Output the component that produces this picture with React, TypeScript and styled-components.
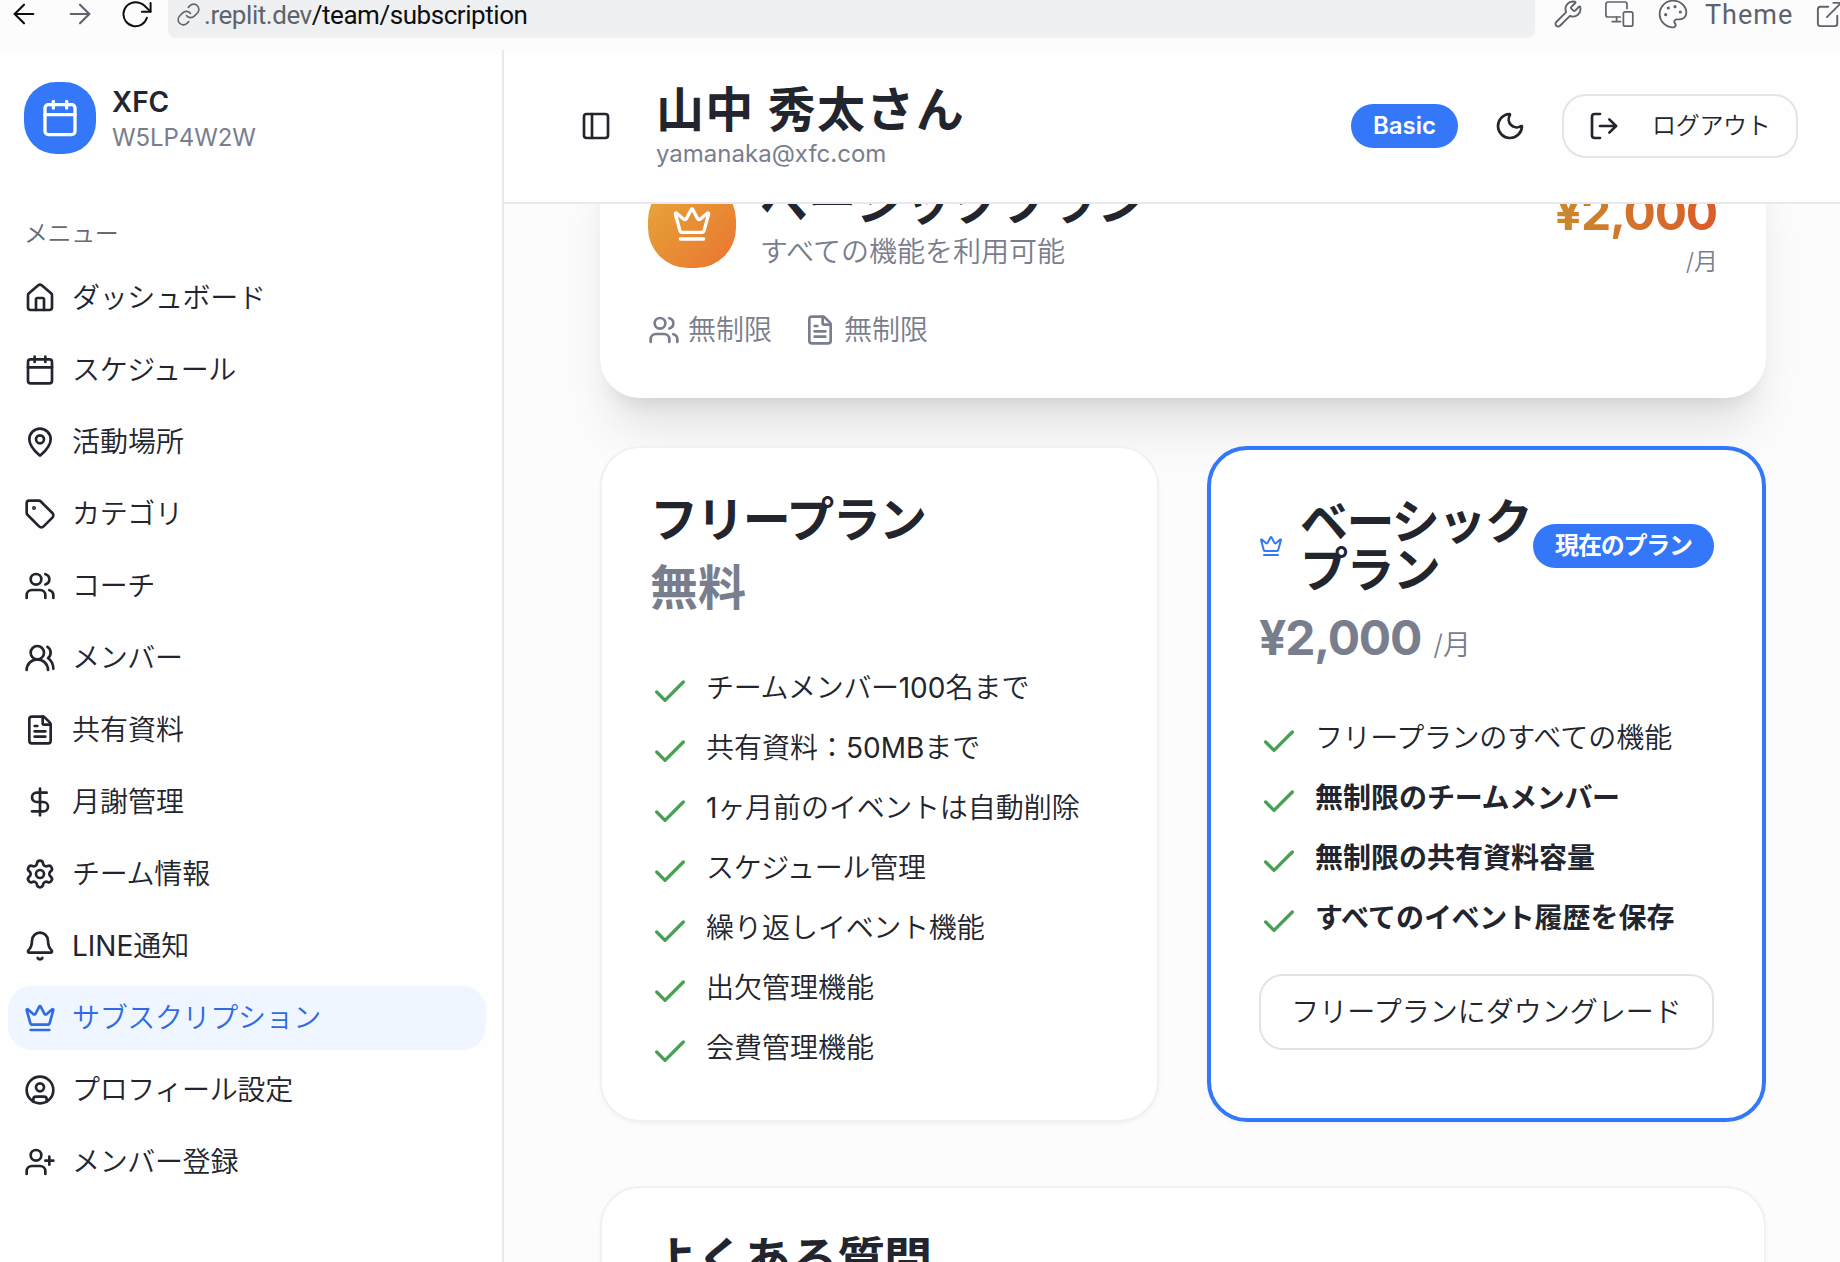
import React from "react";
import styled, { createGlobalStyle, css } from "styled-components";
import {
  ArrowLeft,
  ArrowRight,
  Bell,
  Calendar,
  Check,
  CircleUser,
  Crown,
  DollarSign,
  ExternalLink,
  FileText,
  House,
  Link,
  LogOut,
  MapPin,
  Moon,
  Palette,
  PanelLeft,
  Settings,
  Tag,
  UserPlus,
  Users,
  UsersRound,
  Wrench,
} from "lucide-react";

const color = {
  ink: "#22252d",
  muted: "#787e8d",
  blue: "#3477f8",
  border: "#e8e9ed",
  page: "#fcfcfc",
  panel: "#fefefe",
  chrome: "#5f636b",
  green: "#48a152",
};

const GlobalStyle = createGlobalStyle`
  *, *::before, *::after { box-sizing: border-box; }
  body {
    margin: 0;
    background: ${color.page};
    color: ${color.ink};
    font-family: Inter, "Noto Sans CJK JP", sans-serif;
    font-size: 28px;
    line-height: 40px;
    font-weight: 400;
    -webkit-font-smoothing: antialiased;
  }
  h1, h2, h3, p, ul { margin: 0; padding: 0; }
  ul { list-style: none; }
  svg { flex-shrink: 0; display: block; }
  button { font: inherit; color: inherit; cursor: pointer; }
`;

const Page = styled.div`
  width: 1840px;
  height: 1262px;
  overflow: hidden;
  display: flex;
  flex-direction: column;
`;

/* ---------- browser bar ---------- */

const BrowserBar = styled.div`
  height: 50px;
  flex: none;
  display: flex;
  align-items: flex-start;
  background: ${color.page};
  color: ${color.chrome};
  overflow: hidden;
  font-family: Roboto, "Noto Sans", sans-serif;
`;

const NavButtons = styled.div`
  display: flex;
  align-items: center;
  flex: none;
  width: 168px;
  height: 28px;
  padding-left: 8px;
  gap: 24px;
`;

const AddressBar = styled.div`
  flex: none;
  width: 1367px;
  height: 38px;
  padding: 0 0 10px 8px;
  display: flex;
  align-items: center;
  gap: 3px;
  background: #eff0f2;
  border-radius: 0 0 8px 8px;
`;

const Address = styled.span`
  padding-top: 2px;
  font-size: 26px;
  line-height: 28px;
  letter-spacing: -0.45px;
  white-space: nowrap;
`;

const AddressPath = styled.span`
  color: #0d0e11;
`;

const Tools = styled.div`
  flex: none;
  height: 28px;
  padding-left: 18px;
  display: flex;
  align-items: center;
  white-space: nowrap;
`;

const ToolSlot = styled.span<{ $gap: number }>`
  display: flex;
  margin-right: ${(p) => p.$gap}px;
`;

const ThemeLabel = styled.span`
  width: 109px;
  padding-top: 2px;
  font-size: 27px;
  line-height: 28px;
  letter-spacing: 1px;
`;

/* ---------- shell ---------- */

const Shell = styled.div`
  flex: 1;
  min-height: 0;
  display: flex;
`;

const Sidebar = styled.aside`
  width: 504px;
  flex: none;
  background: ${color.panel};
  border-right: 2px solid ${color.border};
`;

const Brand = styled.div`
  display: flex;
  align-items: center;
  gap: 16px;
  padding: 32px 24px 0;
`;

const BrandMark = styled.div`
  width: 72px;
  height: 72px;
  display: grid;
  place-items: center;
  border-radius: 32px;
  background: ${color.blue};
  color: #fff;
`;

const BrandText = styled.div`
  padding-top: 2px;
`;

const BrandName = styled.div`
  font-weight: 600;
  font-size: 28px;
  line-height: 37px;
`;

const BrandCode = styled.div`
  font-size: 24px;
  line-height: 33px;
  letter-spacing: -0.1px;
  color: ${color.muted};
`;

const MenuLabel = styled.div`
  padding: 64px 24px 0;
  font-size: 24px;
  line-height: 32px;
  font-weight: 350;
  letter-spacing: -0.4px;
  color: #666a73;
`;

const Menu = styled.nav`
  display: flex;
  flex-direction: column;
  gap: 8px;
  padding: 16px 16px 0 8px;
`;

const MenuItem = styled.a<{ $active?: boolean }>`
  height: 64px;
  display: flex;
  align-items: center;
  gap: 16px;
  padding: 0 16px;
  border-radius: 24px;
  font-weight: 350;
  ${(p) =>
    p.$active &&
    css`
      background: #eff6ff;
      color: #2f6be4;
    `}
`;

const Main = styled.main`
  flex: 1;
  min-width: 0;
  display: flex;
  flex-direction: column;
`;

const Header = styled.header`
  height: 154px;
  flex: none;
  display: flex;
  align-items: center;
  padding: 0 42px 0 76px;
  background: ${color.panel};
  border-bottom: 2px solid ${color.border};
`;

const Identity = styled.div`
  margin-left: 44px;
  padding-bottom: 2px;
  flex: 1;
`;

const UserName = styled.h1`
  font-size: 48px;
  line-height: 60px;
  font-weight: 700;
  letter-spacing: 1.3px;
  word-spacing: 0.5px;
`;

const Email = styled.p`
  margin-top: -2px;
  font-size: 24px;
  line-height: 32px;
  color: ${color.muted};
`;

const Badge = styled.span<{ $tight?: boolean }>`
  height: 44px;
  flex: none;
  display: flex;
  align-items: center;
  justify-content: center;
  width: ${(p) => (p.$tight ? 181 : 107)}px;
  border-radius: 22px;
  background: ${color.blue};
  color: #fff;
  font-size: 24px;
  font-weight: 600;
  letter-spacing: ${(p) => (p.$tight ? "-1.2px" : "0")};
  white-space: nowrap;
`;

const IconButton = styled.button`
  border: 0;
  background: none;
  padding: 0;
  margin: 0 36px;
  display: flex;
`;

const LogoutButton = styled.button`
  width: 236px;
  height: 64px;
  display: flex;
  align-items: center;
  gap: 32px;
  padding: 0 24px;
  border: 2px solid #e4e4e6;
  border-radius: 24px;
  background: ${color.panel};
  font-size: 24px;
  font-weight: 350;
  letter-spacing: -0.3px;
  white-space: nowrap;
`;

const ScrollArea = styled.div`
  flex: 1;
  min-height: 0;
  overflow: hidden;
  background: ${color.page};
`;

const Content = styled.div`
  margin-top: -72px;
  padding: 0 74px 0 96px;
`;

/* ---------- current plan ---------- */

const CurrentPlan = styled.section`
  height: 266px;
  padding: 48px;
  border-radius: 40px;
  background: #fff;
  box-shadow:
    0 40px 50px -10px rgba(0, 0, 0, 0.1),
    0 16px 20px -12px rgba(0, 0, 0, 0.1);
`;

const CurrentTop = styled.div`
  display: flex;
  align-items: flex-start;
  height: 88px;
`;

const PlanMark = styled.div`
  width: 88px;
  height: 88px;
  display: grid;
  place-items: center;
  border-radius: 40px;
  color: #fff;
  background: linear-gradient(135deg, #e6aa3a, #ea7430);
`;

const CurrentText = styled.div`
  flex: 1;
  margin-left: 24px;
`;

const Title = styled.h2`
  font-size: 48px;
  line-height: 48px;
  font-weight: 700;
  letter-spacing: -1.6px;
`;

const CurrentTitle = styled(Title)`
  margin-top: -1px;
  letter-spacing: 0.3px;
`;

const FaqTitle = styled(Title)`
  letter-spacing: -1.2px;
`;

const Subtitle = styled.p`
  padding-top: 5px;
  color: ${color.muted};
  font-weight: 350;
`;

const CurrentPrice = styled.div`
  padding-top: 1px;
  text-align: right;
`;

const GradientAmount = styled.div`
  padding-right: 1px;
  font-size: 48px;
  line-height: 64px;
  font-weight: 700;
  letter-spacing: -1.2px;
  background: linear-gradient(90deg, #ca8a2c, #dd5a2a);
  background-clip: text;
  -webkit-background-clip: text;
  color: transparent;
`;

const PerMonthSmall = styled.div`
  padding-top: 1px;
  font-size: 24px;
  line-height: 32px;
  font-weight: 350;
  color: ${color.muted};
`;

const Stats = styled.div`
  display: flex;
  gap: 32px;
  margin-top: 42px;
  color: ${color.muted};
  font-weight: 350;
`;

const Stat = styled.div`
  display: flex;
  align-items: center;
  gap: 8px;
`;

/* ---------- plan cards ---------- */

const Plans = styled.div`
  display: grid;
  grid-template-columns: 1fr 1fr;
  gap: 48px;
  margin-top: 48px;
`;

const Card = styled.section<{ $current?: boolean }>`
  padding: 48px;
  border-radius: 40px;
  background: #fff;
  border: ${(p) => (p.$current ? `4px solid ${color.blue}` : "2px solid #f1f1f2")};
  box-shadow: 0 2px 4px rgba(0, 0, 0, 0.04);
`;

const PlanCard = styled(Card)`
  height: 676px;
`;

const FaqCard = styled(Card)`
  margin-top: 64px;
  height: 400px;
`;

const PlanHead = styled.div`
  display: flex;
  align-items: center;
  color: ${color.blue};
`;

const PlanTitle = styled(Title)`
  flex: 1;
  margin-left: 17px;
  color: ${color.ink};
  white-space: nowrap;
`;

const PriceRow = styled.div`
  display: flex;
  align-items: baseline;
  margin-top: 12px;
  height: 60px;
  color: ${color.muted};
`;

const Amount = styled.span<{ $tight?: boolean }>`
  font-size: 48px;
  line-height: 64px;
  font-weight: 700;
  letter-spacing: ${(p) => (p.$tight ? "-1.2px" : "0")};
`;

const PerMonth = styled.span`
  margin-left: 12px;
  font-weight: 350;
`;

const Features = styled.ul`
  display: flex;
  flex-direction: column;
  gap: 20px;
  margin-top: 52px;
`;

const Feature = styled.li<{ $bold?: boolean }>`
  height: 40px;
  display: flex;
  align-items: flex-start;
  gap: 16px;
  white-space: nowrap;
  font-weight: ${(p) => (p.$bold ? 600 : 350)};
`;

const CheckMark = styled(Check)`
  margin-top: 4px;
  color: ${color.green};
`;

const Latin = styled.span`
  font-weight: 400;
`;

const Kana = styled.span`
  letter-spacing: -0.35px;
`;

const DowngradeButton = styled.button`
  width: 100%;
  height: 76px;
  margin-top: 36px;
  border: 2px solid #e4e4e6;
  border-radius: 24px;
  background: #fff;
  font-size: 28px;
  font-weight: 350;
  white-space: nowrap;
`;

/* ---------- data ---------- */

const menu = [
  { label: "ダッシュボード", icon: House },
  { label: "スケジュール", icon: Calendar },
  { label: "活動場所", icon: MapPin },
  { label: "カテゴリ", icon: Tag },
  { label: "コーチ", icon: Users },
  { label: "メンバー", icon: UsersRound },
  { label: "共有資料", icon: FileText },
  { label: "月謝管理", icon: DollarSign },
  { label: "チーム情報", icon: Settings },
  { label: "LINE通知", icon: Bell },
  { label: "サブスクリプション", icon: Crown, active: true },
  { label: "プロフィール設定", icon: CircleUser },
  { label: "メンバー登録", icon: UserPlus },
];

const freeFeatures = [
  "チームメンバー100名まで",
  "共有資料：50MBまで",
  "1ヶ月前のイベントは自動削除",
  "スケジュール管理",
  "繰り返しイベント機能",
  "出欠管理機能",
  "会費管理機能",
];

const basicFeatures = [
  { text: "フリープランのすべての機能", bold: false },
  { text: "無制限のチームメンバー", bold: true },
  { text: "無制限の共有資料容量", bold: true },
  { text: "すべてのイベント履歴を保存", bold: true },
];

/** Sets Latin runs at regular weight and katakana runs slightly tighter than kanji. */
const Mixed = ({ text }: { text: string }) => (
  <span>
    {text
      .split(/([A-Za-z0-9]+|[ァ-ヺー]+)/)
      .filter(Boolean)
      .map((part, i) => {
        if (/^[A-Za-z0-9]+$/.test(part)) return <Latin key={i}>{part}</Latin>;
        if (/^[ァ-ヺー]+$/.test(part)) return <Kana key={i}>{part}</Kana>;
        return part;
      })}
  </span>
);

const ReloadIcon = () => (
  <svg width="32" height="28" viewBox="0 0 32 28" fill="none" stroke="#0d0e11" strokeWidth="2" strokeLinecap="round" strokeLinejoin="round">
    <path d="M26.9 17.8A12 12 0 1 1 15.3 2.2c3.8 0 6.6 1.2 9 3.4L30.6 11.6" />
    <path d="M30.6 3v8.7h-8.7" />
  </svg>
);

const DevicesIcon = () => (
  <svg width="29" height="28" viewBox="0 0 29 28" fill="none" stroke="currentColor" strokeWidth="1.7" strokeLinecap="round" strokeLinejoin="round">
    <path d="M22 8.6V4a2 2 0 0 0-2-2H2.9a2 2 0 0 0-2 2v11a2 2 0 0 0 2 2h12.3" />
    <path d="M11.6 17v4.7M7.2 21.7h8.4" />
    <rect x="18.4" y="11.8" width="9.4" height="14.4" rx="1.8" />
  </svg>
);

export default function App() {
  return (
    <Page>
      <GlobalStyle />
      <BrowserBar>
        <NavButtons>
          <ArrowLeft size={32} strokeWidth={1.6} color="#0d0e11" />
          <ArrowRight size={32} strokeWidth={1.6} />
          <ReloadIcon />
        </NavButtons>
        <AddressBar>
          <Link size={25} strokeWidth={1.5} />
          <Address>
            .replit.dev<AddressPath>/team/subscription</AddressPath>
          </Address>
        </AddressBar>
        <Tools>
          <ToolSlot $gap={22}>
            <Wrench size={30} strokeWidth={1.5} />
          </ToolSlot>
          <ToolSlot $gap={23}>
            <DevicesIcon />
          </ToolSlot>
          <ToolSlot $gap={16}>
            <Palette size={32} strokeWidth={1.4} />
          </ToolSlot>
          <ThemeLabel>Theme</ThemeLabel>
          <ExternalLink size={31} strokeWidth={1.5} />
        </Tools>
      </BrowserBar>

      <Shell>
        <Sidebar>
          <Brand>
            <BrandMark>
              <Calendar size={40} />
            </BrandMark>
            <BrandText>
              <BrandName>XFC</BrandName>
              <BrandCode>W5LP4W2W</BrandCode>
            </BrandText>
          </Brand>
          <MenuLabel>メニュー</MenuLabel>
          <Menu>
            {menu.map(({ label, icon: Icon, active }) => (
              <MenuItem key={label} $active={active}>
                <Icon size={32} />
                <Mixed text={label} />
              </MenuItem>
            ))}
          </Menu>
        </Sidebar>

        <Main>
          <Header>
            <PanelLeft size={32} />
            <Identity>
              <UserName>山中 秀太さん</UserName>
              <Email>yamanaka@xfc.com</Email>
            </Identity>
            <Badge>Basic</Badge>
            <IconButton aria-label="テーマ">
              <Moon size={32} />
            </IconButton>
            <LogoutButton>
              <LogOut size={32} />
              ログアウト
            </LogoutButton>
          </Header>

          <ScrollArea>
            <Content>
              <CurrentPlan>
                <CurrentTop>
                  <PlanMark>
                    <Crown size={40} />
                  </PlanMark>
                  <CurrentText>
                    <CurrentTitle>ベーシックプラン</CurrentTitle>
                    <Subtitle>すべての機能を利用可能</Subtitle>
                  </CurrentText>
                  <CurrentPrice>
                    <GradientAmount>¥2,000</GradientAmount>
                    <PerMonthSmall>/月</PerMonthSmall>
                  </CurrentPrice>
                </CurrentTop>
                <Stats>
                  <Stat>
                    <Users size={32} />
                    無制限
                  </Stat>
                  <Stat>
                    <FileText size={32} />
                    無制限
                  </Stat>
                </Stats>
              </CurrentPlan>

              <Plans>
                <PlanCard>
                  <Title>フリープラン</Title>
                  <PriceRow>
                    <Amount>無料</Amount>
                  </PriceRow>
                  <Features>
                    {freeFeatures.map((text) => (
                      <Feature key={text}>
                        <CheckMark size={40} />
                        <Mixed text={text} />
                      </Feature>
                    ))}
                  </Features>
                </PlanCard>

                <PlanCard $current>
                  <PlanHead>
                    <Crown size={24} />
                    <PlanTitle>
                      ベーシック
                      <br />
                      プラン
                    </PlanTitle>
                    <Badge $tight>現在のプラン</Badge>
                  </PlanHead>
                  <PriceRow>
                    <Amount $tight>¥2,000</Amount>
                    <PerMonth>/月</PerMonth>
                  </PriceRow>
                  <Features>
                    {basicFeatures.map(({ text, bold }) => (
                      <Feature key={text} $bold={bold}>
                        <CheckMark size={40} />
                        <Mixed text={text} />
                      </Feature>
                    ))}
                  </Features>
                  <DowngradeButton>フリープランにダウングレード</DowngradeButton>
                </PlanCard>
              </Plans>

              <FaqCard>
                <FaqTitle>よくある質問</FaqTitle>
              </FaqCard>
            </Content>
          </ScrollArea>
        </Main>
      </Shell>
    </Page>
  );
}
